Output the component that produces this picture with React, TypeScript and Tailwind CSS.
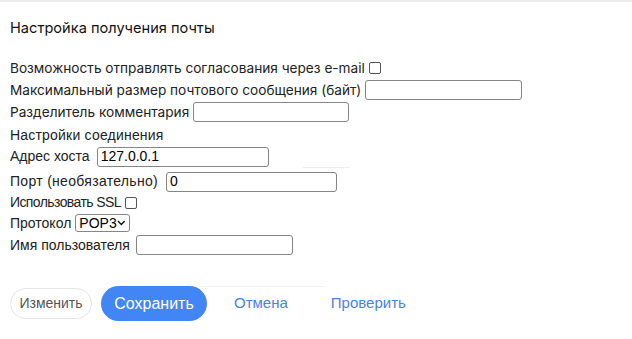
const inputClass =
    'h-[20px] rounded-[3px] border border-[#858585] bg-white px-[3px] text-[14px] text-black outline-none';

function Row({ className, children }: { className: string; children: React.ReactNode }) {
    return <div className={`flex items-center ${className}`}>{children}</div>;
}

function Checkbox({ className }: { className: string }) {
    return <span className={`inline-block size-[12px] rounded-[2px] border border-[#555] bg-white ${className}`} />;
}

export default function App() {
    return (
        <div className="relative min-h-[339px] w-[632px] bg-white text-[#222]">
            <div className="h-[2px] bg-[#ededed]" />

            <div className="px-[10px] pt-[17px] font-['Inter',sans-serif] text-[14.6px] leading-[18px] text-[#111]">
                Настройка получения почты
            </div>

            <div className="flex flex-col px-[10px] pt-[20px]">
                <div className="font-['Inter',sans-serif] text-[13.65px] text-[#222]">
                    <Row className="h-[22px]">
                        Возможность отправлять согласования через e-mail
                        <Checkbox className="ml-[4px]" />
                    </Row>
                    <Row className="h-[22px]">
                        Максимальный размер почтового сообщения (байт)
                        <input className={`${inputClass} ml-[4px] w-[157px]`} />
                    </Row>
                    <Row className="h-[22px]">
                        Разделитель комментария
                        <input className={`${inputClass} ml-[4px] w-[156px]`} />
                    </Row>
                </div>

                <div className="font-['Liberation_Sans',Arial,sans-serif] text-[14px] text-[#222]">
                    <Row className="h-[22px] pt-[2px]">
                        <span className="tracking-[0.2px]">Настройки соединения</span>
                    </Row>
                    <Row className="h-[23px]">
                        Адрес хоста
                        <input
                            className={`${inputClass} ml-[7px] w-[172px] font-['Liberation_Sans',Arial,sans-serif]`}
                            defaultValue="127.0.0.1"
                        />
                    </Row>
                    <Row className="h-[25px] pt-[2px]">
                        <span className="tracking-[0.3px]">Порт (необязательно)</span>
                        <input
                            className={`${inputClass} ml-[8px] w-[171px] font-['Liberation_Sans',Arial,sans-serif]`}
                            defaultValue="0"
                        />
                    </Row>
                    <Row className="h-[19px]">
                        <span className="tracking-[-0.6px]">Использовать SSL</span>
                        <Checkbox className="ml-[4px]" />
                    </Row>
                    <Row className="h-[22px]">
                        Протокол
                        <span className="ml-[4px] flex h-[18px] w-[55px] items-center justify-between rounded-[3px] border border-[#858585] pl-[3px] pr-[4px] text-[14px] text-black">
                            POP3
                            <svg width="9" height="6" viewBox="0 0 9 6" fill="none" stroke="#111" strokeWidth="1.5">
                                <path d="M1 1l3.5 3.5L8 1" />
                            </svg>
                        </span>
                    </Row>
                    <Row className="h-[22px]">
                        Имя пользователя
                        <input className={`${inputClass} ml-[6px] w-[157px]`} />
                    </Row>
                </div>
            </div>

            <div className="flex items-center px-[10px] pt-[30px] font-['Liberation_Sans',Arial,sans-serif]">
                <button className="h-[31px] w-[82px] rounded-full border border-[#e6e6e6] bg-white text-[14px] text-[#555]">
                    Изменить
                </button>
                <button className="ml-[9px] h-[35px] w-[106px] rounded-full bg-[#4285f4] text-[16px] text-white">
                    Сохранить
                </button>
                <button className="ml-[27px] text-[15px] text-[#4a80e8]">Отмена</button>
                <button className="ml-[43px] text-[15px] text-[#4a80e8]">Проверить</button>
            </div>

            <div className="absolute left-[303px] top-[167px] h-px w-[47px] bg-[#eeeeee]" />
            <div className="absolute left-[200px] top-[286px] h-px w-[125px] bg-[#f2f2f2]" />
        </div>
    );
}
